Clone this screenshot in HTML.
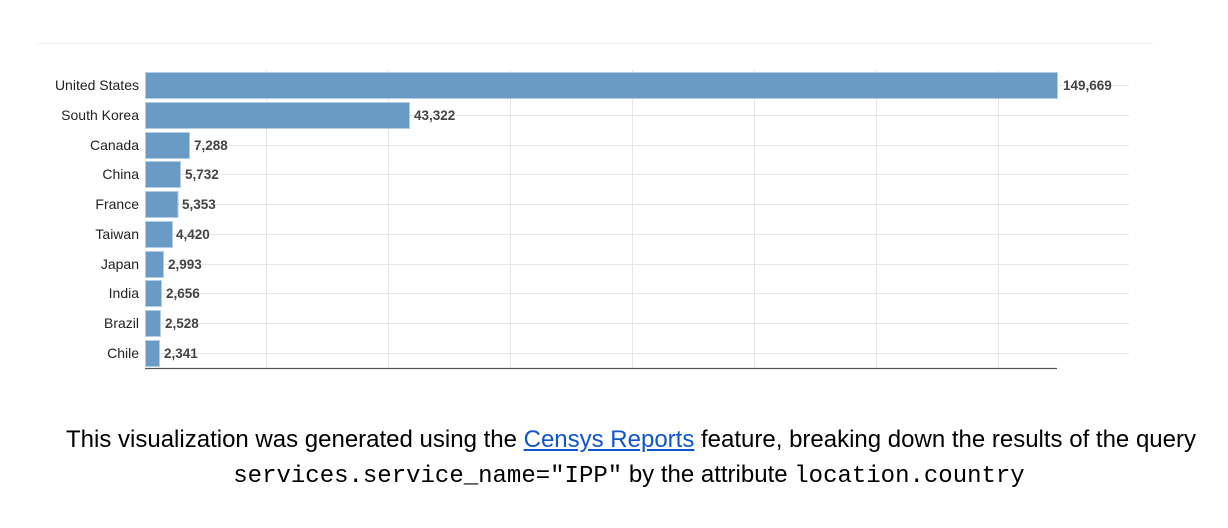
<!DOCTYPE html>
<html><head><meta charset="utf-8"><style>
html,body{margin:0;padding:0;background:#fff;width:1228px;height:528px;overflow:hidden}
.cap{position:absolute;left:0;width:1262px;text-align:center;font-family:"Liberation Sans",Arial,sans-serif;font-size:24px;line-height:28px;color:#000;white-space:nowrap}
.m{font-family:"Liberation Mono",monospace;font-size:24px}
a{color:#1155cc;text-decoration:underline}
</style></head><body>
<svg width="1228" height="400" style="position:absolute;left:0;top:0" font-family="Liberation Sans, Arial, sans-serif">
<line x1="38" y1="43.5" x2="1153" y2="43.5" stroke="#eee" stroke-width="1"/>
<g stroke="#e6e6e6" stroke-width="1">
<line x1="266.5" y1="70" x2="266.5" y2="368"/><line x1="388.5" y1="70" x2="388.5" y2="368"/>
<line x1="510.5" y1="70" x2="510.5" y2="368"/><line x1="632.5" y1="70" x2="632.5" y2="368"/>
<line x1="754.5" y1="70" x2="754.5" y2="368"/><line x1="876.5" y1="70" x2="876.5" y2="368"/>
<line x1="998.5" y1="70" x2="998.5" y2="368"/>
<line x1="145" y1="85.5" x2="1129" y2="85.5"/><line x1="145" y1="115.5" x2="1129" y2="115.5"/>
<line x1="145" y1="145.5" x2="1129" y2="145.5"/><line x1="145" y1="174.5" x2="1129" y2="174.5"/>
<line x1="145" y1="204.5" x2="1129" y2="204.5"/><line x1="145" y1="234.5" x2="1129" y2="234.5"/>
<line x1="145" y1="264.5" x2="1129" y2="264.5"/><line x1="145" y1="293.5" x2="1129" y2="293.5"/>
<line x1="145" y1="323.5" x2="1129" y2="323.5"/><line x1="145" y1="353.5" x2="1129" y2="353.5"/>
</g>
<g fill="#6a9bc6" stroke="#b5cde3" stroke-width="1">
<rect x="145.5" y="72.5" width="912" height="26"/>
<rect x="145.5" y="102.5" width="264" height="26"/>
<rect x="145.5" y="132.5" width="44" height="26"/>
<rect x="145.5" y="161.5" width="35" height="26"/>
<rect x="145.5" y="191.5" width="32.5" height="26"/>
<rect x="145.5" y="221.5" width="27" height="26"/>
<rect x="145.5" y="251.5" width="18" height="26"/>
<rect x="145.5" y="280.5" width="16" height="26"/>
<rect x="145.5" y="310.5" width="15" height="26"/>
<rect x="145.5" y="340.5" width="14" height="26"/>
</g>
<line x1="145" y1="368.5" x2="1057" y2="368.5" stroke="#555" stroke-width="1.2"/>
<g font-size="14" fill="#222" text-anchor="end">
<text x="139" y="90">United States</text><text x="139" y="120">South Korea</text>
<text x="139" y="150">Canada</text><text x="139" y="179">China</text>
<text x="139" y="209">France</text><text x="139" y="239">Taiwan</text>
<text x="139" y="269">Japan</text><text x="139" y="298">India</text>
<text x="139" y="328">Brazil</text><text x="139" y="358">Chile</text>
</g>
<g font-size="13.5" font-weight="bold" fill="#444">
<text x="1063" y="90">149,669</text><text x="414" y="120">43,322</text>
<text x="194" y="150">7,288</text><text x="185" y="179">5,732</text>
<text x="182" y="209">5,353</text><text x="176" y="239">4,420</text>
<text x="168" y="269">2,993</text><text x="166" y="298">2,656</text>
<text x="165" y="328">2,528</text><text x="164" y="358">2,341</text>
</g>
</svg>
<div class="cap" style="top:426px">This visualization was generated using the <a>Censys Reports</a> feature, breaking down the results of the query</div>
<div class="cap" style="top:461px;left:-2px"><span class="m">services.service_name="IPP"</span> by the attribute <span class="m">location.country</span></div>
</body></html>
